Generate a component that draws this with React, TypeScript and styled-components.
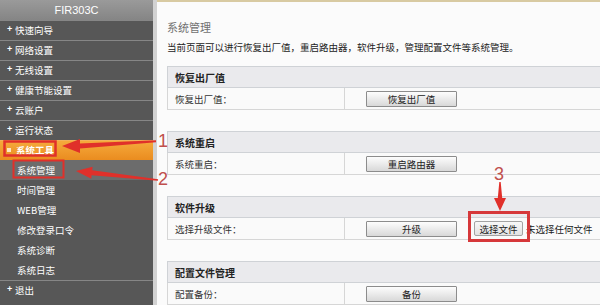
import React from "react";
import styled, { createGlobalStyle } from "styled-components";

const GlobalStyle = createGlobalStyle`
  html, body {
    margin: 0;
    padding: 0;
    width: 600px;
    height: 305px;
    overflow: hidden;
    background: #fbfbfb;
  }
  body {
    font-family: "Noto Sans CJK SC", "Liberation Sans", sans-serif;
  }
`;

const Page = styled.div`
  position: relative;
  display: flex;
  width: 600px;
  height: 305px;
  overflow: hidden;
`;

const Sidebar = styled.nav`
  width: 153px;
  flex-shrink: 0;
  background: #575757;
  border-right: 4px solid #d2d2d2;
  display: flex;
  flex-direction: column;
`;

const Brand = styled.div`
  height: 20px;
  background: linear-gradient(#9a9a9a, #858585);
  color: #fff;
  font-family: "Liberation Sans", Arial, sans-serif;
  font-size: 11px;
  display: flex;
  align-items: center;
  justify-content: center;
`;

const NavItem = styled.div<{ $active?: boolean }>`
  height: 20px;
  box-sizing: border-box;
  border-top: 1px solid ${(p) => (p.$active ? "#f2b25a" : "#868686")};
  display: flex;
  align-items: center;
  padding: 0 0 2px 7px;
  gap: 3px;
  color: #fff;
  font-size: 9.5px;
  font-weight: ${(p) => (p.$active ? 700 : 400)};
  background: ${(p) =>
    p.$active ? "linear-gradient(#f5aa3c, #ea8c1f)" : "transparent"};
`;

const Plus = styled.span`
  font-family: "Liberation Sans", sans-serif;
  font-size: 9px;
  font-weight: 700;
  width: 5px;
  line-height: 1;
`;

const Square = styled.span`
  width: 4px;
  height: 4px;
  background: #fde6c4;
  margin-right: 2px;
`;

const SubItem = styled.div<{ $selected?: boolean }>`
  height: 20px;
  display: flex;
  align-items: center;
  padding-left: 17px;
  color: #fff;
  font-size: 9.5px;
  background: ${(p) => (p.$selected ? "#6c6c6c" : "transparent")};
`;

const Content = styled.main`
  flex: 1;
  min-width: 0;
  border-top: 2px solid #d8caa2;
  padding: 15px 0 0 10px;
  background: #fbfbfb;
`;

const Title = styled.div`
  font-size: 11px;
  line-height: 20px;
  color: #707070;
`;

const Desc = styled.div`
  font-size: 9.5px;
  line-height: 20px;
  color: #222;
  margin-bottom: 9px;
  white-space: nowrap;
`;

const Section = styled.section`
  width: 450px;
  margin-bottom: 21px;
`;

const SectionHeader = styled.div`
  height: 22px;
  box-sizing: border-box;
  border: 1px solid #cfd2d6;
  background: #eaeaed;
  padding-left: 7px;
  display: flex;
  align-items: center;
  font-size: 10px;
  font-weight: 700;
  color: #222;
`;

const Row = styled.div`
  display: flex;
  height: 22px;
  box-sizing: border-box;
  border: 1px solid #d6d6d6;
  border-top: none;
  background: #fafafa;
`;

const LabelCell = styled.div`
  width: 177px;
  box-sizing: border-box;
  border-right: 1px solid #d6d6d6;
  padding-left: 7px;
  display: flex;
  align-items: center;
  font-size: 9.5px;
  color: #333;
`;

const ActionCell = styled.div`
  display: flex;
  align-items: center;
  padding-left: 21px;
`;

const Button = styled.button`
  width: 91px;
  height: 16px;
  box-sizing: border-box;
  padding: 0;
  border: 1px solid #8c8c8c;
  border-radius: 1px;
  background: linear-gradient(#fdfdfd, #d8d8d8);
  font-family: "Noto Sans CJK SC", sans-serif;
  font-size: 9.5px;
  color: #222;
  display: flex;
  align-items: center;
  justify-content: center;
`;

const FileButton = styled.button`
  width: 49px;
  height: 15px;
  box-sizing: border-box;
  margin-left: 17px;
  padding: 0;
  border: 1px solid #a3a3a3;
  border-radius: 2px;
  background: linear-gradient(#f8f8f8, #e2e2e2);
  font-family: "Noto Sans CJK SC", sans-serif;
  font-size: 9.5px;
  color: #222;
  display: flex;
  align-items: center;
  justify-content: center;
`;

const FileText = styled.span`
  margin-left: 3px;
  font-size: 9.5px;
  color: #222;
  white-space: nowrap;
`;

const Overlay = styled.div`
  position: absolute;
  inset: 0;
  pointer-events: none;
`;

const Marker = styled.span`
  position: absolute;
  font-family: "Liberation Sans", Arial, sans-serif;
  font-size: 18px;
  line-height: 18px;
  color: #c0504d;
`;

const topItems = ["快速向导", "网络设置", "无线设置", "健康节能设置", "云账户", "运行状态"];
const subItems = ["系统管理", "时间管理", "WEB管理", "修改登录口令", "系统诊断", "系统日志"];

const RED = "#e0302a";

export default function App() {
  return (
    <>
      <GlobalStyle />
      <Page>
        <Sidebar>
          <Brand>FIR303C</Brand>
          {topItems.map((t) => (
            <NavItem key={t}>
              <Plus>+</Plus>
              {t}
            </NavItem>
          ))}
          <NavItem $active>
            <Square />
            系统工具
          </NavItem>
          {subItems.map((t, i) => (
            <SubItem key={t} $selected={i === 0}>
              {t}
            </SubItem>
          ))}
          <NavItem>
            <Plus>+</Plus>
            退出
          </NavItem>
        </Sidebar>
        <Content>
          <Title>系统管理</Title>
          <Desc>当前页面可以进行恢复出厂值，重启路由器，软件升级，管理配置文件等系统管理。</Desc>
          <Section>
            <SectionHeader>恢复出厂值</SectionHeader>
            <Row>
              <LabelCell>恢复出厂值：</LabelCell>
              <ActionCell>
                <Button>恢复出厂值</Button>
              </ActionCell>
            </Row>
          </Section>
          <Section>
            <SectionHeader>系统重启</SectionHeader>
            <Row>
              <LabelCell>系统重启：</LabelCell>
              <ActionCell>
                <Button>重启路由器</Button>
              </ActionCell>
            </Row>
          </Section>
          <Section>
            <SectionHeader>软件升级</SectionHeader>
            <Row>
              <LabelCell>选择升级文件：</LabelCell>
              <ActionCell>
                <Button>升级</Button>
                <FileButton>选择文件</FileButton>
                <FileText>未选择任何文件</FileText>
              </ActionCell>
            </Row>
          </Section>
          <Section>
            <SectionHeader>配置文件管理</SectionHeader>
            <Row>
              <LabelCell>配置备份：</LabelCell>
              <ActionCell>
                <Button>备份</Button>
              </ActionCell>
            </Row>
          </Section>
        </Content>
        <Overlay>
          <svg width="600" height="305" viewBox="0 0 600 305">
            <rect x="4.5" y="141.5" width="51" height="14" fill="none" stroke={RED} strokeWidth="2.5" />
            <rect x="13.5" y="160.5" width="50" height="17" fill="none" stroke={RED} strokeWidth="2" />
            <rect x="469.5" y="212.5" width="59" height="28" fill="none" stroke="#d6383a" strokeWidth="3" />
            <polygon
              points="156,140.3 156,142.3 80,148.5 80,153 62,146 80,139 80,143.5"
              fill={RED}
            />
            <polygon
              points="76,171 92.6,166.8 92.2,170.2 158.1,179.2 157.9,180.8 91.6,175.2 91.3,178.7"
              fill={RED}
            />
            <polygon
              points="499.3,182 500.7,182 502.2,198 506,198 500,211 494,198 497.8,198"
              fill={RED}
            />
          </svg>
          <Marker style={{ left: 158, top: 131.5 }}>1</Marker>
          <Marker style={{ left: 158, top: 169.5 }}>2</Marker>
          <Marker style={{ left: 494, top: 164.5 }}>3</Marker>
        </Overlay>
      </Page>
    </>
  );
}
